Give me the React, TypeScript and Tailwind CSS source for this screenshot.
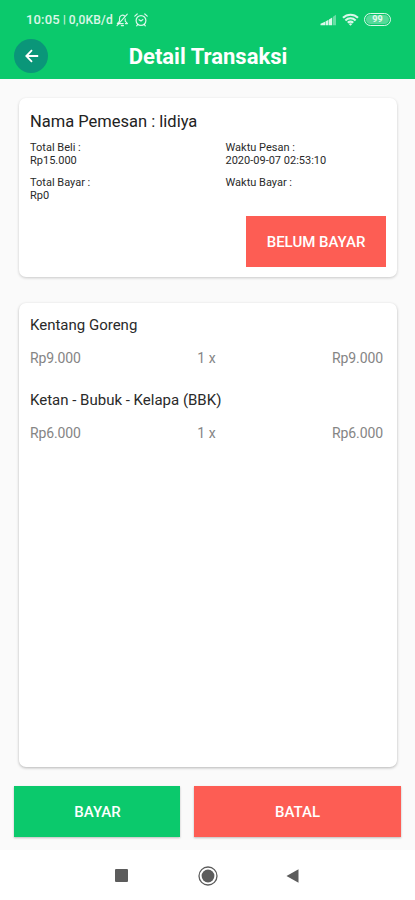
import React from 'react';

interface OrderItem {
  id: string;
  name: string;
  price: string;
  qty: number;
  total: string;
}

interface InfoFieldProps {
  label: string;
  value?: string;
}

function StatusBar() {
  return (
    <div className="flex h-[39px] items-center justify-between pl-[26px] pr-[24px] text-white/85">
      <div className="flex items-center">
        <span className="w-[34px] whitespace-nowrap text-[13px] leading-none font-medium tracking-[0.15px]">10:05</span>
        <span className="ml-[3px] text-[11.5px] leading-none">|</span>
        <span className="ml-[3px] w-[45px] whitespace-nowrap text-[12px] leading-none font-medium tracking-[0.15px]">0,0KB/d</span>
        {/* Muted bell */}
        <svg className="ml-[2px]" width="13" height="14" viewBox="0 0 13 14" fill="none" stroke="currentColor" strokeWidth="1.1" strokeLinecap="round" strokeLinejoin="round">
          <path d="M8.6 3A3 3 0 0 0 3.5 5.2v2.9L1.3 10.6h5.9M9.2 5.8v2.3l2.3 2.5H9.4M5.3 12.6h2.2" />
          <path d="M11.3 1.2 1 12.6" />
        </svg>
        {/* Alarm clock */}
        <svg className="ml-[5px]" width="14" height="14" viewBox="0 0 14 14" fill="none" stroke="currentColor" strokeWidth="1.2" strokeLinecap="round">
          <circle cx="7" cy="7.5" r="4.9" />
          <path d="M.8 3.1 3.2 1M13.2 3.1 10.8 1M3.6 11.6l-.9 1.2M10.4 11.6l.9 1.2M5 6.8l2 1.2 1.8-1.4" />
        </svg>
      </div>
      <div className="flex items-center">
        {/* Signal */}
        <svg width="17" height="12" viewBox="0 0 17 12" fill="currentColor">
          <path d="M.5 11.3V9.8L5 7.8v3.5ZM5.5 11.3V7.5L8.5 5.8v5.5ZM9 11.3V5.4l3.2-2v7.9Z" />
          <path opacity=".45" d="M13 11.3V2.8L16 .8v10.5Z" />
        </svg>
        {/* Wifi */}
        <svg className="ml-[5px]" width="17" height="13" viewBox="0 0 17 13" fill="none" stroke="currentColor" strokeWidth="2.1">
          <path d="M1 4.8a10.6 10.6 0 0 1 15 0M3.4 7.4a7.2 7.2 0 0 1 10.2 0M5.8 9.8a3.8 3.8 0 0 1 5.4 0" />
          <path d="M8.5 12.8 6.8 11a2.4 2.4 0 0 1 3.4 0Z" fill="currentColor" stroke="none" />
        </svg>
        <div className="ml-[5px] flex h-[13px] w-[27px] items-center justify-center rounded-full border border-white/85 p-px">
          <div className="flex h-full w-full items-center justify-center rounded-full bg-white/30 text-[9px] leading-none font-bold">
            99
          </div>
        </div>
      </div>
    </div>
  );
}

function Header() {
  return (
    <header className="h-[79px] shrink-0 bg-[#0bc96c]">
      <StatusBar />
      <div className="grid h-[34px] grid-cols-[34px_1fr_34px] items-center px-[14px]">
        <button className="flex size-[34px] items-center justify-center rounded-full bg-[#0a9679] text-white" aria-label="Kembali">
          <svg className="ml-px" width="14" height="14" viewBox="0 0 14 14" fill="none" stroke="currentColor" strokeWidth="1.8">
            <path d="M13.2 7H1.5M7 1.2 1.3 7 7 12.8" />
          </svg>
        </button>
        <h1 className="pl-px pt-[2px] text-center text-[22px] leading-none font-bold text-white">Detail Transaksi</h1>
      </div>
    </header>
  );
}

function InfoField({ label, value }: InfoFieldProps) {
  return (
    <div className="h-[35px] text-[11px] leading-[13px] text-[#2a2a2a]">
      <p>{label} :</p>
      <p>{value}</p>
    </div>
  );
}

function ItemRow({ item }: { item: OrderItem }) {
  return (
    <li className="h-[75px]">
      <p className="text-[15px] leading-[18px] text-[#2a2a2a]">{item.name}</p>
      <div className="mt-[15px] grid grid-cols-3 text-[14px] leading-[18px] text-[#858585]">
        <span className="tracking-[-0.15px]">{item.price}</span>
        <span className="text-center">{item.qty} x</span>
        <span className="text-right tracking-[-0.1px]">{item.total}</span>
      </div>
    </li>
  );
}

function NavigationBar() {
  return (
    <nav className="flex h-[50px] shrink-0 items-center justify-center gap-[69px] bg-white pr-[2px] pt-px text-[#5c5c5c]">
      <svg width="13" height="13" viewBox="0 0 13 13" fill="currentColor">
        <rect width="13" height="13" rx="1" />
      </svg>
      <svg className="ml-[1px] mr-[-1px]" width="20" height="20" viewBox="0 0 20 20" fill="currentColor">
        <circle cx="10" cy="10" r="9" fill="none" stroke="currentColor" strokeWidth="1.3" />
        <circle cx="10" cy="10" r="6.4" />
      </svg>
      <svg width="13" height="14" viewBox="0 0 13 14" fill="currentColor">
        <path d="M12.5.3v13.4L.5 7Z" />
      </svg>
    </nav>
  );
}

export default function App() {
  const items: OrderItem[] = [
    { id: '1', name: 'Kentang Goreng', price: 'Rp9.000', qty: 1, total: 'Rp9.000' },
    { id: '2', name: 'Ketan - Bubuk - Kelapa (BBK)', price: 'Rp6.000', qty: 1, total: 'Rp6.000' },
  ];

  return (
    <div className="flex h-[900px] w-[415px] flex-col overflow-hidden bg-[#fafafa] font-[Roboto,sans-serif]">
      <Header />

      <main className="flex flex-1 flex-col pt-[19px]">
        {/* Order summary */}
        <section className="ml-[19px] mr-[18px] flex h-[179px] flex-col rounded-[7px] bg-white pl-[11px] pr-[11px] pt-[13px] shadow-[0_1px_3px_rgba(0,0,0,0.2)]">
          <h2 className="text-[16.5px] leading-[22px] text-[#222222]">Nama Pemesan : lidiya</h2>
          <div className="mt-[8px] grid grid-cols-[195.5px_1fr]">
            <InfoField label="Total Beli" value="Rp15.000" />
            <InfoField label="Waktu Pesan" value="2020-09-07 02:53:10" />
            <InfoField label="Total Bayar" value="Rp0" />
            <InfoField label="Waktu Bayar" />
          </div>
          <div className="mt-[5px] flex h-[51px] w-[140px] items-center justify-center self-end bg-[#fd5d54] pt-[2px] text-[15px] font-medium text-white">
            BELUM BAYAR
          </div>
        </section>

        {/* Ordered items */}
        <section className="ml-[19px] mr-[18px] mt-[26px] h-[464px] rounded-[7px] bg-white pl-[11px] pr-[14px] pt-[13px] shadow-[0_1px_3px_rgba(0,0,0,0.28)]">
          <ul>
            {items.map((item) => (
              <ItemRow key={item.id} item={item} />
            ))}
          </ul>
        </section>

        {/* Actions */}
        <div className="mt-[19px] flex gap-[14px] px-[14px]">
          <button className="h-[51px] w-[166px] bg-[#0bc96c] pl-px pt-[2px] text-[15px] font-medium text-white shadow-[0_1px_2px_rgba(0,0,0,0.25)]">
            BAYAR
          </button>
          <button className="h-[51px] flex-1 bg-[#fd5d54] pt-[2px] text-[15px] font-medium text-white shadow-[0_1px_2px_rgba(0,0,0,0.25)]">
            BATAL
          </button>
        </div>
      </main>

      <NavigationBar />
    </div>
  );
}
